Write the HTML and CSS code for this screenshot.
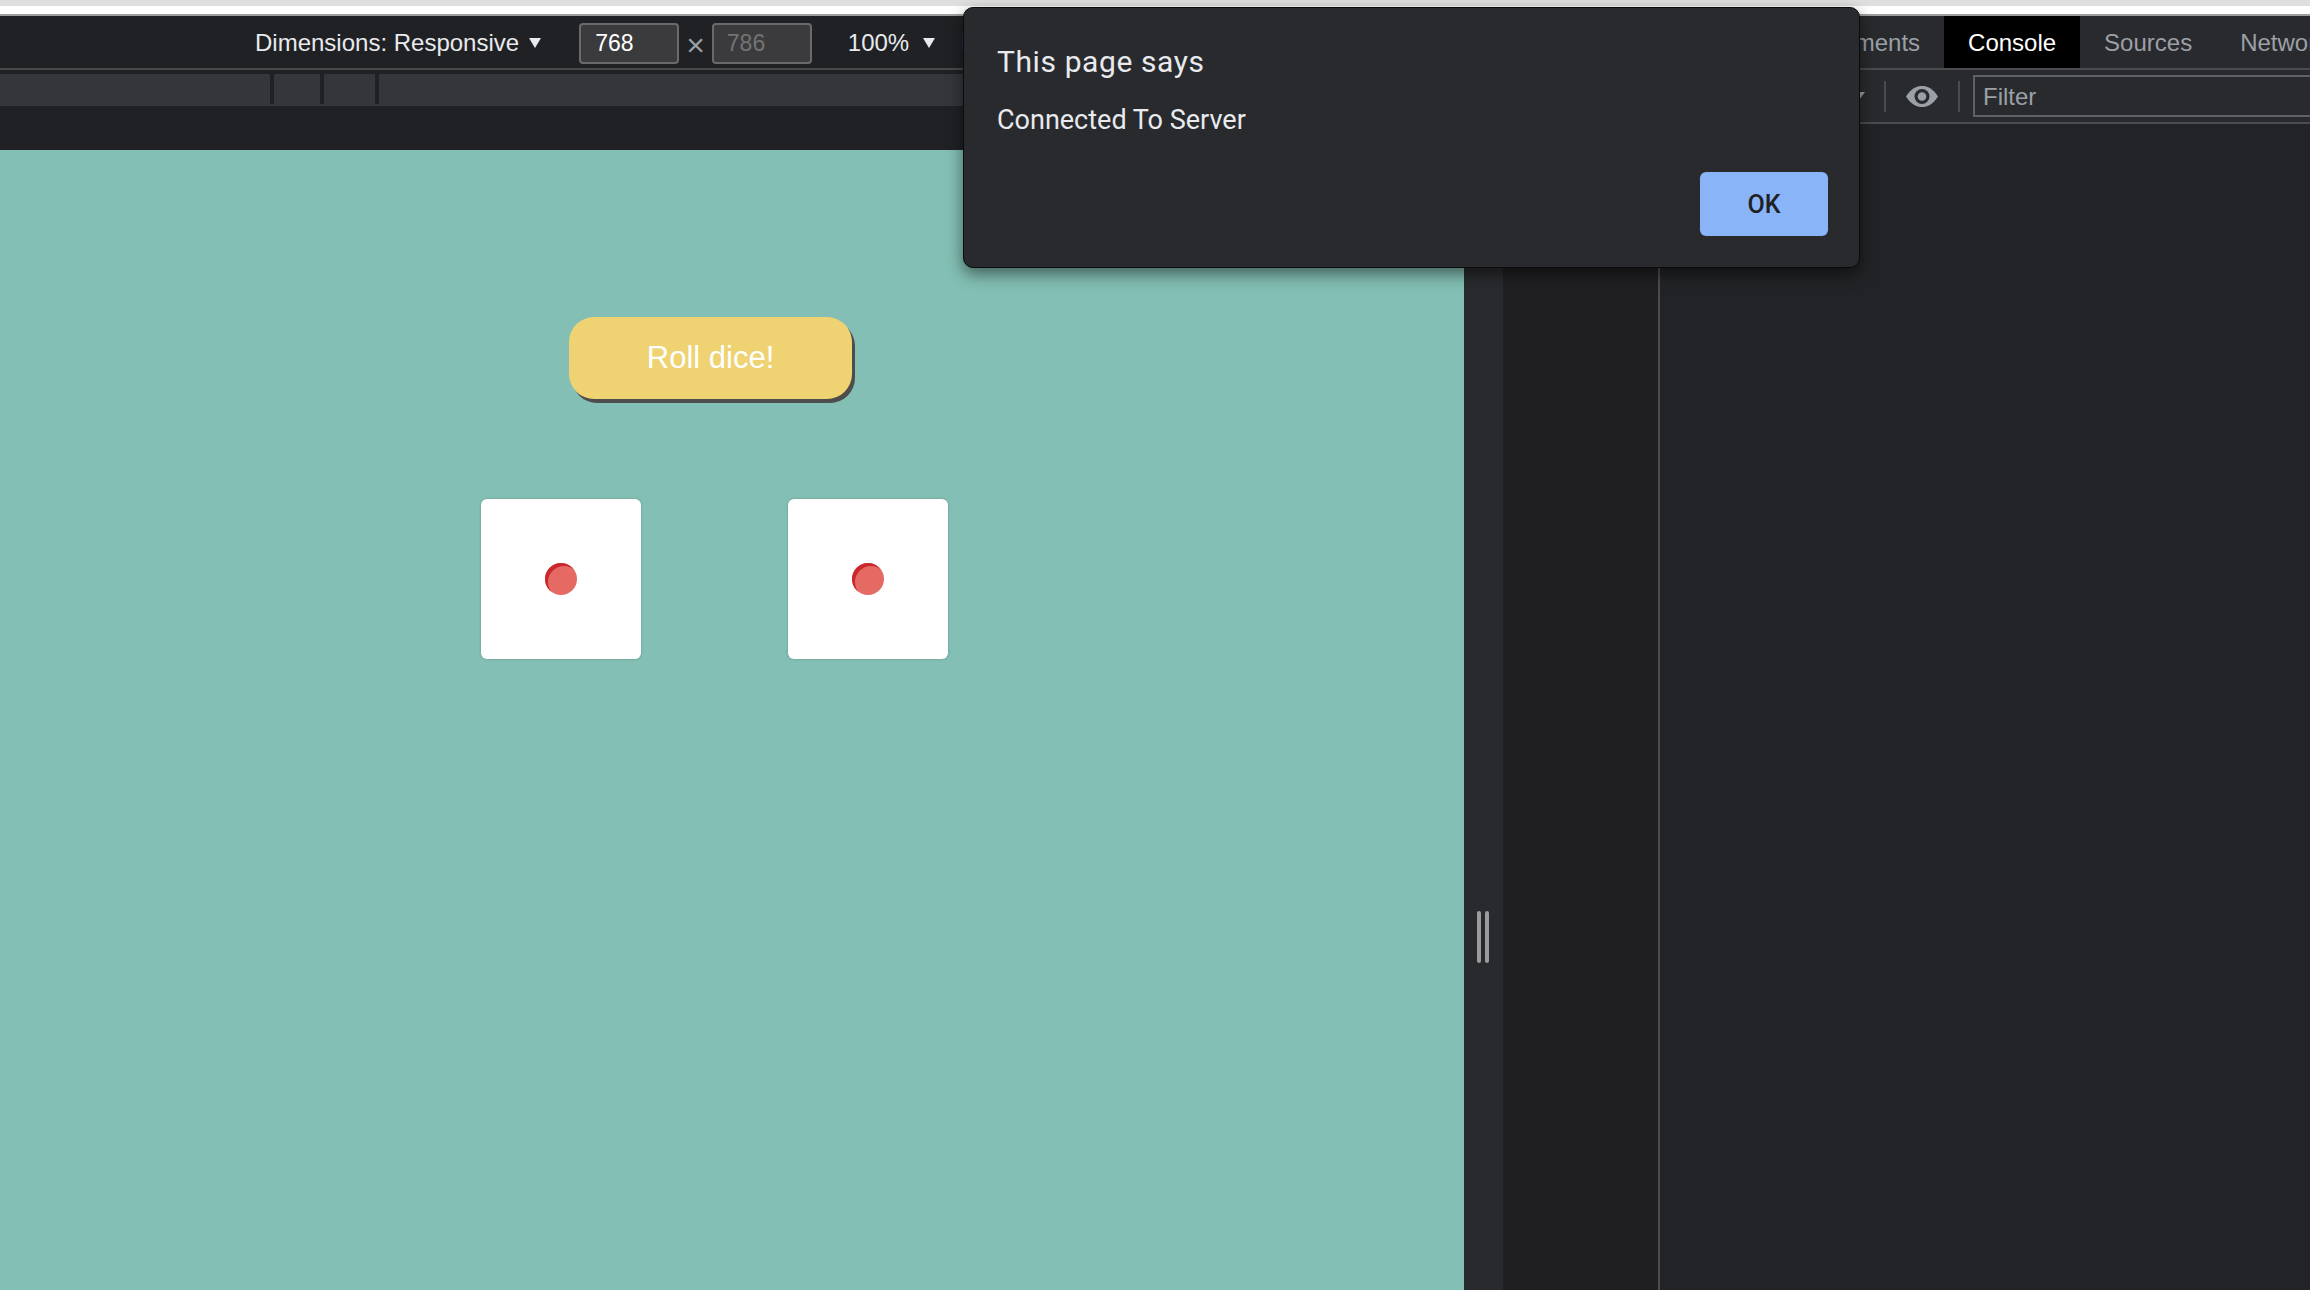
FILE: index.html
```html
<!DOCTYPE html>
<html lang="en">
<head>
<meta charset="utf-8">
<title>Dice</title>
<link rel="stylesheet" href="styles.css">
</head>
<body>
<div class="browser-top"></div>
<div class="main">
  <section class="device">
    <div class="device-toolbar">
      <span class="dt-label">Dimensions: Responsive</span><span class="caret-lg"></span>
      <span class="dim-input">768</span>
      <span class="times">×</span>
      <span class="dim-input muted">786</span>
      <span class="dt-label zoom">100%</span><span class="caret-lg zoom-caret"></span>
      <span class="dt-label throttle">No throttling</span>
    </div>
    <div class="ruler">
      <span class="seg seg-a"></span>
      <span class="seg seg-b"></span>
      <span class="seg seg-c"></span>
      <span class="seg seg-rest"></span>
    </div>
    <div class="viewport-row">
      <div class="viewport">
        <button class="roll">Roll dice!</button>
        <div class="dice">
          <div class="die"><span class="pip"></span></div>
          <div class="die"><span class="pip"></span></div>
        </div>
      </div>
      <div class="handle"><span class="grip"></span><span class="grip"></span></div>
    </div>
  </section>
  <section class="devtools">
    <div class="tabbar">
      <span class="tab">Elements</span>
      <span class="tab active">Console</span>
      <span class="tab">Sources</span>
      <span class="tab">Network</span>
    </div>
    <div class="console-toolbar">
      <span class="ctx">top</span><span class="caret-sm"></span>
      <span class="vsep"></span>
      <svg class="eye" viewBox="0 0 32 21" width="32" height="21">
        <path d="M0 10.5 C5 2.5 10.5 0 16 0 C21.5 0 27 2.5 32 10.5 C27 18.5 21.5 21 16 21 C10.5 21 5 18.5 0 10.5 Z" fill="#9aa0a6"/>
        <circle cx="16" cy="10.5" r="7.5" fill="#292a2d"/>
        <circle cx="16" cy="10.5" r="4.3" fill="#9aa0a6"/>
      </svg>
      <span class="vsep"></span>
      <div class="filter">Filter</div>
    </div>
    <div class="console-body">
      <div class="sidebar"></div>
      <div class="console-main"></div>
    </div>
  </section>
</div>
<div class="dialog">
  <div class="dialog-title">This page says</div>
  <div class="dialog-msg">Connected To Server</div>
  <div class="dialog-actions"><button class="ok">OK</button></div>
</div>
</body>
</html>
```

FILE: styles.css
```css
* { box-sizing: border-box; }

body {
  margin: 0;
  width: 2310px;
  height: 1290px;
  overflow: hidden;
  position: relative;
  background: #202124;
  font-family: "Liberation Sans", Arial, sans-serif;
}

.browser-top {
  height: 16px;
  background: #ffffff;
  border-top: 6px solid #dfdfdf;
  border-bottom: 2px solid #9e9e9e;
}

.main {
  display: flex;
  height: 1274px;
}

/* ---------- device mode side ---------- */
.device {
  width: 1503px;
  flex: none;
  display: flex;
  flex-direction: column;
  background: #202124;
}

.device-toolbar {
  height: 54px;
  padding: 2px 0 0 255px;
  border-bottom: 2px solid #4a4a4d;
  display: flex;
  align-items: center;
  white-space: nowrap;
  overflow: hidden;
}

.dt-label {
  font-size: 24px;
  color: #e8eaed;
}

.caret-lg {
  width: 0;
  height: 0;
  margin-left: 10px;
  border-left: 6px solid transparent;
  border-right: 6px solid transparent;
  border-top: 10px solid #e8eaed;
}

.dim-input {
  margin-left: 38px;
  width: 100px;
  height: 41px;
  background: #3b3b3d;
  border: 2px solid #6a6a6c;
  border-radius: 4px;
  padding-left: 14px;
  display: flex;
  align-items: center;
  font-size: 23px;
  color: #ffffff;
}

.dim-input.muted {
  margin-left: 0;
  padding-left: 13px;
  color: #737373;
}

.times {
  margin: 3px 7px 0 7px;
  font-size: 32px;
  line-height: 1;
  color: #9aa0a6;
}

.zoom { margin-left: 36px; }
.zoom-caret { margin-left: 14px; }
.throttle { margin-left: 26px; }

.ruler {
  margin: 4px 0 44px;
  height: 32px;
  background: #35363a;
  display: flex;
}

.seg {
  height: 30px;
  flex: none;
  border-right: 4px solid #202124;
}
.seg-a { width: 274px; }
.seg-b { width: 50px; }
.seg-c { width: 55px; }
.seg-rest { flex: 1; border-right: none; }

.viewport-row {
  flex: 1;
  display: flex;
}

.viewport {
  width: 1464px;
  flex: none;
  background: #83bfb4;
  display: flex;
  flex-direction: column;
  align-items: flex-start;
}

.roll {
  margin: 167px 0 0 569px;
  width: 283px;
  height: 82px;
  padding: 0;
  border: none;
  border-radius: 25px;
  background: #efd271;
  color: #ffffff;
  font-family: "Liberation Sans", Arial, sans-serif;
  font-size: 31px;
  box-shadow: 3px 4px 0 #4d4d4d;
}

.dice {
  display: flex;
  gap: 147px;
  margin: 100px 0 0 481px;
}

.die {
  width: 160px;
  height: 160px;
  background: #ffffff;
  border-radius: 6px;
  box-shadow: 0 0 3px rgba(0, 0, 0, 0.2);
  display: flex;
  align-items: center;
  justify-content: center;
}

.pip {
  width: 32px;
  height: 32px;
  border-radius: 50%;
  background: #e46a63;
  box-shadow: inset 3px 3px 0 #c9282d;
}

.handle {
  flex: 1;
  background: #292a2d;
  display: flex;
  align-items: flex-start;
  gap: 4px;
  padding: 761px 0 0 13px;
}

.grip {
  width: 4px;
  height: 52px;
  border-radius: 2px;
  background: #9b9b9b;
}

/* ---------- devtools ---------- */
.devtools {
  flex: 1;
  min-width: 0;
  display: flex;
  flex-direction: column;
  overflow: hidden;
}

.tabbar {
  height: 54px;
  flex: none;
  padding-left: 293px;
  background: #292a2d;
  border-bottom: 2px solid #4a4b4f;
  display: flex;
  white-space: nowrap;
  overflow: hidden;
}

.tab {
  padding: 1px 24px 0;
  display: flex;
  align-items: center;
  font-size: 24px;
  color: #9aa0a6;
}

.tab.active {
  background: #000000;
  color: #ffffff;
}

.console-toolbar {
  height: 54px;
  flex: none;
  background: #292a2d;
  border-bottom: 2px solid #4a4b4f;
  display: flex;
  align-items: center;
  white-space: nowrap;
}

.ctx {
  width: 340px;
  flex: none;
  text-align: right;
  padding-right: 4px;
  font-size: 22px;
  color: #e8eaed;
}

.caret-sm {
  width: 0;
  height: 0;
  margin-left: 10px;
  border-left: 6px solid transparent;
  border-right: 6px solid transparent;
  border-top: 8px solid #9aa0a6;
}

.vsep {
  width: 2px;
  height: 31px;
  margin-left: 19px;
  background: #4a4b4f;
  flex: none;
}

.eye {
  margin-left: 20px;
  flex: none;
  display: block;
}

.eye + .vsep { margin-left: 20px; }

.filter {
  margin-left: 13px;
  width: 420px;
  height: 42px;
  flex: none;
  border: 2px solid #5f6166;
  padding: 2px 0 0 8px;
  display: flex;
  align-items: center;
  font-size: 24px;
  color: #9aa0a6;
}

.console-body {
  flex: 1;
  display: flex;
}

.sidebar {
  width: 157px;
  flex: none;
  background: #1f1f21;
  border-right: 2px solid #4b4c50;
}

.console-main {
  flex: 1;
  background: #222326;
}

/* ---------- alert dialog ---------- */
.dialog {
  position: absolute;
  left: 963px;
  top: 7px;
  width: 897px;
  height: 261px;
  padding: 39px 31px 31px 33px;
  background: #292a2d;
  border: 1px solid #0b0b0c;
  border-radius: 10px;
  box-shadow: 0 6px 16px rgba(0, 0, 0, 0.5);
  display: flex;
  flex-direction: column;
  font-family: Roboto, "Noto Sans", sans-serif;
  color: #e8eaed;
}

.dialog-title {
  font-size: 30px;
  line-height: 30px;
  letter-spacing: 0.6px;
}

.dialog-msg {
  margin-top: 30px;
  font-size: 27px;
  line-height: 27px;
}

.dialog-actions {
  margin-top: 38px;
  display: flex;
  justify-content: flex-end;
}

.ok {
  width: 128px;
  height: 64px;
  padding: 0;
  border: none;
  border-radius: 6px;
  background: #8ab4f8;
  color: #202124;
  font-family: Roboto, "Noto Sans", sans-serif;
  font-size: 25px;
  font-weight: 500;
}
```
